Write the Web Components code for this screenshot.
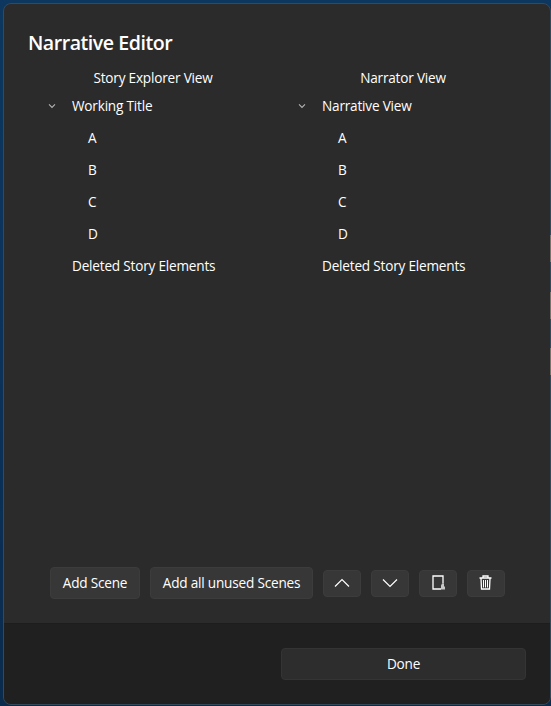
<!DOCTYPE html>
<html lang="en">
<head>
<meta charset="utf-8">
<title>Narrative Editor</title>
<style>
html,body{margin:0;height:100%;overflow:hidden}
body{background:linear-gradient(#0d375f,#0b3159 60%,#0a2b4c);color:#fff;font:13.6px/20px "Open Sans","Noto Sans",sans-serif;letter-spacing:-.2px}
</style>
</head>
<body>
<narrative-dialog></narrative-dialog>
<script>
function define(name, html) {
  const template = document.createElement('template');
  template.innerHTML = html;
  customElements.define(name, class extends HTMLElement {
    constructor() {
      super();
      this.attachShadow({mode: 'open'}).append(template.content.cloneNode(true));
    }
  });
}

define('tree-row', `
<style>
:host{display:flex;align-items:center;height:32px;padding-left:44px;box-sizing:border-box;position:relative;white-space:nowrap}
:host([child]){padding-left:60px}
svg{display:none;position:absolute;left:20px;top:13px}
:host([open]) svg{display:block}
</style>
<svg width="8" height="6" fill="none" stroke="#b4b4b4" stroke-width="1.1"><path d="M1 1.4 4 4.4 7 1.4"/></svg><slot></slot>`);

define('tree-column', `
<style>
:host{display:block;width:250px}
header{height:23px;line-height:21px;text-align:center;white-space:nowrap}
</style>
<header><slot name="title"></slot></header><slot></slot>`);

define('tool-button', `
<style>
:host{display:flex;align-items:center;justify-content:center;box-sizing:border-box;height:32px;border:1px solid #3c3c3c;border-radius:4px;background:#373737;white-space:nowrap}
:host([icon]){width:38px;height:27px}
:host([wide]){width:245px;background:#2d2d2d;border-color:#343434}
</style>
<slot></slot>`);

define('narrative-dialog', `
<style>
:host{display:flex;flex-direction:column;box-sizing:border-box;width:548px;height:702px;margin:3px 0 0 3px;border:1px solid #34495a;border-radius:8px;background:#2b2b2b;position:relative}
main{flex:1;display:flex;flex-direction:column;padding:25px 22px 24px 24px}
h1{font:600 19.6px/28px "Open Sans","Noto Sans",sans-serif;letter-spacing:-.48px;margin:0 0 10px;white-space:nowrap}
.columns{display:flex;flex:1}
.tools{display:flex;gap:10px;align-items:center;padding-left:22px}
.add{width:90px}.all{width:163px}
footer{display:flex;justify-content:flex-end;padding:24px;height:32px;border-top:1px solid #1d1d1d;border-radius:0 0 7px 7px;background:#202020}
svg{display:block;fill:none;stroke:#fff}
.edge{position:absolute;right:-1px;width:1px;height:27px;background:#77736d}
</style>
<main>
<h1>Narrative Editor</h1>
<div class="columns">
<tree-column><span slot="title">Story Explorer View</span>
<tree-row open><span>Working Title</span></tree-row><tree-row child>A</tree-row><tree-row child>B</tree-row><tree-row child>C</tree-row><tree-row child>D</tree-row><tree-row><span>Deleted Story Elements</span></tree-row></tree-column>
<tree-column><span slot="title">Narrator View</span>
<tree-row open><span>Narrative View</span></tree-row><tree-row child>A</tree-row><tree-row child>B</tree-row><tree-row child>C</tree-row><tree-row child>D</tree-row><tree-row><span>Deleted Story Elements</span></tree-row></tree-column>
</div>
<div class="tools">
<tool-button class="add"><span>Add Scene</span></tool-button>
<tool-button class="all"><span>Add all unused Scenes</span></tool-button>
<tool-button icon><svg width="16" height="16" stroke-width="1.2"><path d="M1 11.5 8 4.5 15 11.5"/></svg></tool-button>
<tool-button icon><svg width="16" height="16" stroke-width="1.2"><path d="M1 4.5 8 11.5 15 4.5"/></svg></tool-button>
<tool-button icon><svg width="16" height="16"><path d="M13 8.5V1H3V14H11" stroke-width="1.3"/><path d="M11 14.5V10.5L12 8.5H14V11l1 1v2.5z" fill="#c8c8c8" stroke="none"/></svg></tool-button>
<tool-button icon><svg width="16" height="16"><path d="M1.5 3H13.5M5 2.5V1H10V2.5M3 3.5 3.5 14H11.5L12 3.5" stroke-width="1.3"/><path d="M5.5 5V12.5M7.5 5V12.5M9.5 5V12.5"/></svg></tool-button>
</div>
</main>
<footer><tool-button wide><span>Done</span></tool-button></footer>
<div class="edge" style="top:231px"></div><div class="edge" style="top:288px"></div><div class="edge" style="top:344px"></div>`);
</script>
</body>
</html>
